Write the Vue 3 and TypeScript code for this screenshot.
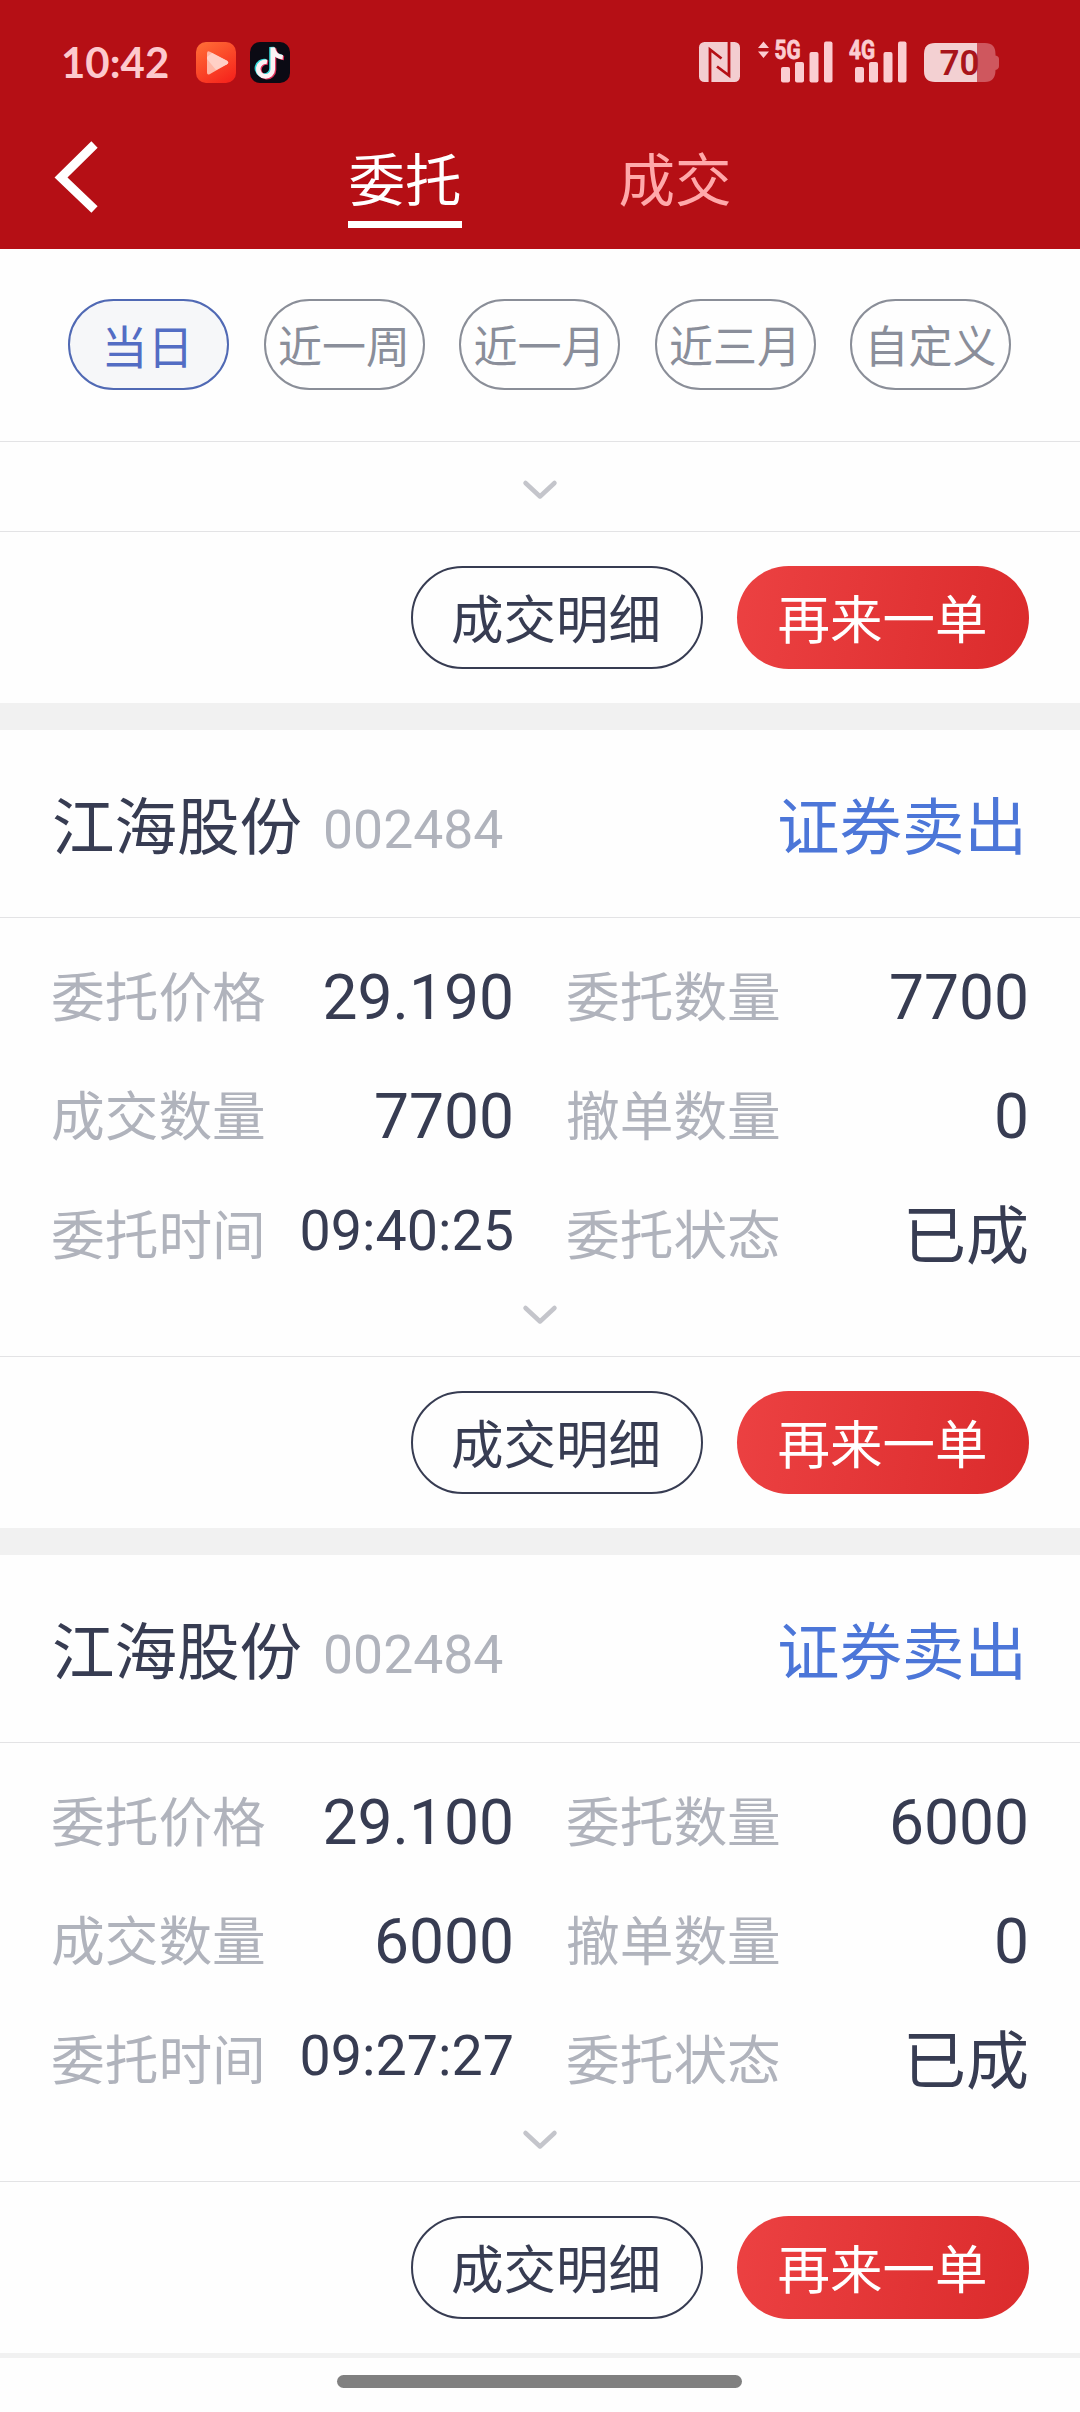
<script setup lang="ts">
interface Field {
  label: string
  value: string
  kind?: 'time' | 'word'
}

interface Order {
  name: string
  code: string
  side: string
  fields: Field[]
}

const ranges: string[] = ['当日', '近一周', '近一月', '近三月', '自定义']

const makeOrder = (price: string, qty: string, time: string): Order => ({
  name: '江海股份',
  code: '002484',
  side: '证券卖出',
  fields: [
    { label: '委托价格', value: price },
    { label: '委托数量', value: qty },
    { label: '成交数量', value: qty },
    { label: '撤单数量', value: '0' },
    { label: '委托时间', value: time, kind: 'time' },
    { label: '委托状态', value: '已成', kind: 'word' },
  ],
})

const orders: Order[] = [
  makeOrder('29.190', '7700', '09:40:25'),
  makeOrder('29.100', '6000', '09:27:27'),
]
</script>

<template>
  <div class="screen">
    <header class="top">
      <div class="status">
        <span class="clock">10:42</span>
        <svg class="app-icon" width="40" height="41" viewBox="0 0 40 41">
          <defs>
            <linearGradient id="play-bg" x1="0.2" y1="0" x2="0.8" y2="1">
              <stop offset="0" stop-color="#ff6a35" />
              <stop offset="1" stop-color="#f6241c" />
            </linearGradient>
          </defs>
          <rect width="40" height="41" rx="10" fill="url(#play-bg)" />
          <path d="M11 11.500 Q11 8 14 9.800 L31 18.700 Q33.500 20.500 31 22.300 L14 32 Q11 33.500 11 30.500 Z" fill="#ffb7a6" />
          <path d="M11 15 L16 11 L31 18.700 Q33.500 20.500 31 22.300 L20 28 L11 17 Z" fill="#ffd0c6" />
        </svg>
        <svg class="app-icon second" width="40" height="41" viewBox="0 0 40 41">
          <rect width="40" height="41" rx="10" fill="#0b0a14" />
          <g fill="none" stroke-width="4.600">
            <path d="M16 19.200 A7.300 7.300 0 1 0 21.500 26.500 V5 C22 10 25.500 14 31.500 14.500" stroke="#35d8d8" />
            <path d="M18 20.700 A7.300 7.300 0 1 0 24 28 V6.500 C24.500 11.500 28 15.500 34 16" stroke="#e0325c" />
            <path d="M17 19.900 A7.300 7.300 0 1 0 22.800 27.200 V5.500 C23.300 10.700 26.800 14.700 32.800 15.200" stroke="#fbf2f4" />
          </g>
        </svg>
        <div class="status-right">
          <svg width="41" height="40" viewBox="0 0 41 40">
            <rect width="41" height="40" rx="5.500" fill="#f3cdd0" />
            <g fill="none" stroke="#b50f15" stroke-width="2.800">
              <path d="M11 40 V7.500 L22.500 16.500" />
              <path d="M30 0 V33.500 L18 24.500" />
            </g>
          </svg>
          <svg class="sig5" width="75" height="42" viewBox="0 0 75 42">
            <g fill="#fbcdd1">
              <path d="M5.500 0.500 L11 7 H0 Z M0 10.500 H11 L5.500 17 Z" />
              <rect x="23" y="26" width="9" height="15.500" rx="2" />
              <rect x="37" y="21" width="9" height="20.500" rx="2" />
              <rect x="51.500" y="11" width="9" height="30.500" rx="2" />
              <rect x="66" y="0.500" width="8.500" height="41" rx="2" />
              <text x="16.500" y="17.800" textLength="26" lengthAdjust="spacingAndGlyphs" class="net">5G</text>
            </g>
          </svg>
          <svg class="sig4" width="58" height="42" viewBox="0 0 58 42">
            <g fill="#fbcdd1">
              <rect x="6" y="26" width="9" height="15.500" rx="2" />
              <rect x="20" y="21" width="9" height="20.500" rx="2" />
              <rect x="34.500" y="11" width="9" height="30.500" rx="2" />
              <rect x="49" y="0.500" width="8.500" height="41" rx="2" />
              <text x="0" y="17.800" textLength="26" lengthAdjust="spacingAndGlyphs" class="net">4G</text>
            </g>
          </svg>
          <svg class="battery" width="75" height="39" viewBox="0 0 75 39">
            <path d="M53 0 H61 Q71.500 0 71.500 11 V12.500 Q75 13 75 16 V23 Q75 26 71.500 27 Q71.500 39 61 39 H53 Z" fill="#cf575e" />
            <path d="M53 0 V39 H11 Q0 39 0 28 V11 Q0 0 11 0 Z" fill="#f3d0d2" />
            <text x="15.500" y="31.800" textLength="40" lengthAdjust="spacingAndGlyphs" class="level">70</text>
          </svg>
        </div>
      </div>
      <nav class="nav">
        <svg class="back" width="42" height="72" viewBox="0 0 42 72">
          <path d="M38.500 3.500 L5 36.500 L38.500 68.500" fill="none" stroke="#fff" stroke-width="9" />
        </svg>
        <div class="tabs">
          <div class="tab active"><span>委托</span></div>
          <div class="tab"><span>成交</span></div>
        </div>
      </nav>
    </header>

    <div class="ranges">
      <span v-for="(r, i) in ranges" :key="r" class="chip" :class="{ on: i === 0 }">{{ r }}</span>
    </div>

    <main class="list">
      <section class="card">
        <div class="more short">
          <svg width="34" height="20" viewBox="0 0 34 20"><path d="M2.500 3 L17 16.500 L31.500 3" /></svg>
        </div>
        <div class="actions">
          <button class="btn">成交明细</button>
          <button class="btn primary">再来一单</button>
        </div>
      </section>

      <section v-for="(o, i) in orders" :key="i" class="card">
        <div class="head">
          <span class="name">{{ o.name }}</span>
          <span class="code">{{ o.code }}</span>
          <span class="side">{{ o.side }}</span>
        </div>
        <div class="body">
          <div class="grid">
            <div v-for="f in o.fields" :key="f.label" class="field">
              <span class="label">{{ f.label }}</span>
              <span class="value" :class="f.kind">{{ f.value }}</span>
            </div>
          </div>
          <div class="more">
            <svg width="34" height="20" viewBox="0 0 34 20"><path d="M2.500 3 L17 16.500 L31.500 3" /></svg>
          </div>
        </div>
        <div class="actions">
          <button class="btn">成交明细</button>
          <button class="btn primary">再来一单</button>
        </div>
      </section>
    </main>

    <footer class="gesture"><div class="pill"></div></footer>
  </div>
</template>

<style>
body {
  margin: 0;
  background: #fefefe;
}
</style>

<style scoped>
.screen {
  display: flex;
  flex-direction: column;
  width: 1080px;
  height: 2412px;
  overflow: hidden;
  background: #fefefe;
  color: #373c52;
  font-family: Roboto, "Noto Sans CJK SC", sans-serif;
}
svg {
  display: block;
  flex: none;
  overflow: visible;
}
.top {
  flex: none;
  height: 249px;
  background: #b50f15;
}
.status {
  display: flex;
  align-items: flex-start;
  height: 83px;
  padding: 42px 81px 0 61px;
  box-sizing: border-box;
}
.clock {
  width: 135px;
  height: 41px;
  font: 700 42px/40px Lato, sans-serif;
  color: #fdc9cd;
  white-space: nowrap;
}
.second {
  margin-left: 14px;
}
.status-right {
  display: flex;
  align-items: flex-start;
  margin-left: auto;
}
.sig5 {
  margin: -1px 0 0 18px;
}
.sig4 {
  margin: -1px 0 0 16px;
}
.battery {
  margin: 1px 0 0 17px;
}
.net {
  font: 700 25px Roboto, sans-serif;
  stroke: #fbcdd1;
  stroke-width: 0.800px;
}
.level {
  font: 600 35px Roboto, sans-serif;
  fill: #a8141b;
}
.nav {
  display: flex;
  height: 166px;
}
.back {
  margin: 58px 0 0 56px;
}
.tabs {
  display: flex;
  margin-left: 172px;
  width: 540px;
}
.tab {
  display: flex;
  flex: 1;
  justify-content: center;
  align-items: flex-start;
  font-size: 56.500px;
  color: #ffa9aa;
}
.tab span {
  box-sizing: border-box;
  width: 114px;
  height: 95px;
  margin-top: 50px;
  line-height: 98px;
  text-align: center;
  white-space: nowrap;
}
.tab.active span {
  color: #fff;
  border-bottom: 7px solid #fff;
}
.ranges {
  display: flex;
  flex: none;
  justify-content: space-between;
  align-items: flex-start;
  box-sizing: border-box;
  height: 193px;
  padding: 50px 69px 0 68px;
  border-bottom: 1px solid #e3e3e5;
}
.chip {
  box-sizing: border-box;
  width: 161px;
  height: 91px;
  border: 2px solid #8a8e98;
  border-radius: 46px;
  color: #8a8e9a;
  font-size: 44px;
  line-height: 95px;
  text-align: center;
  white-space: nowrap;
}
.chip.on {
  padding-right: 2px;
  border-color: #5069b4;
  background: #f6f7f9;
  color: #536dc4;
  font-size: 46px;
  line-height: 94px;
}
.list {
  flex: 1;
  min-height: 0;
  overflow: hidden;
}
.card {
  border-bottom: 27px solid #f1f1f1;
}
.head {
  display: flex;
  align-items: flex-start;
  box-sizing: border-box;
  height: 188px;
  padding: 0 53px 0 52px;
  border-bottom: 1px solid #e3e3e5;
}
.name,
.side {
  font-size: 62.500px;
  line-height: 197px;
}
.code {
  margin-left: 21px;
  font-size: 53.500px;
  line-height: 200px;
  color: #b0b3bc;
}
.side {
  margin-left: auto;
  color: #4c76d8;
}
.body {
  display: flex;
  flex-direction: column;
  height: 438px;
  box-sizing: border-box;
  padding-top: 18px;
}
.grid {
  display: grid;
  grid-template-columns: 463px 463px;
  grid-auto-rows: 119px;
  column-gap: 52px;
  padding-left: 51px;
}
.field {
  display: flex;
  justify-content: space-between;
  line-height: 125px;
  white-space: nowrap;
}
.label {
  font-size: 53.700px;
  color: #b0b3bc;
}
.value {
  font-size: 62.300px;
  line-height: 123px;
}
.value.time {
  font-size: 55.600px;
  line-height: 115px;
}
.value.word {
  font-size: 63px;
  line-height: 125px;
}
.more {
  display: flex;
  justify-content: center;
  padding: 12px 1px 0 0;
}
.more.short {
  height: 51px;
  padding-top: 38px;
}
.more path {
  fill: none;
  stroke: #c4c5cb;
  stroke-width: 4.500;
  stroke-linecap: round;
  stroke-linejoin: round;
}
.actions {
  display: flex;
  justify-content: flex-end;
  gap: 34px;
  box-sizing: border-box;
  height: 172px;
  padding: 34px 51px 0 0;
  border-top: 1px solid #e3e3e5;
}
.btn {
  box-sizing: border-box;
  width: 292px;
  height: 103px;
  padding: 7px 2px 0 0;
  border: 2px solid #373c52;
  border-radius: 52px;
  background: transparent;
  color: #373c52;
  font: 400 52.500px Roboto, "Noto Sans CJK SC", sans-serif;
  line-height: 92px;
  white-space: nowrap;
}
.btn.primary {
  border: 0;
  padding: 7px 1px 0 0;
  background: linear-gradient(100deg, #ec4142, #db2b2c);
  color: #fff;
}
.gesture {
  display: flex;
  flex: none;
  justify-content: center;
  box-sizing: border-box;
  height: 54px;
  padding-right: 1px;
  background: #fefefe;
}
.pill {
  width: 405px;
  height: 13px;
  margin-top: 17px;
  border-radius: 7px;
  background: #808080;
}
</style>
